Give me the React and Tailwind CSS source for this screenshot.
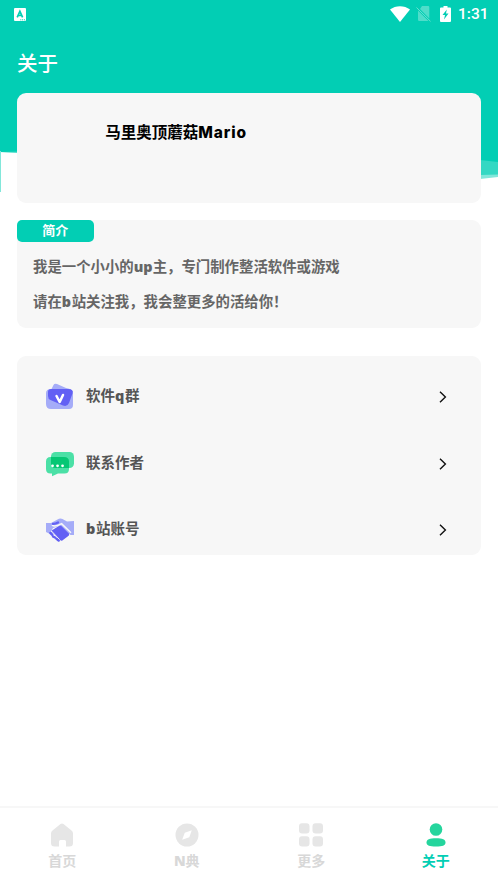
import React from 'react';

const Latin = ({ children, className = '' }) => (
  <span className={`inline-block font-['Open_Sans'] font-extrabold ${className}`}>{children}</span>
);

const StatusBar = () => (
  <div className="flex h-7 items-center justify-between pl-[14px] pr-[9px] text-white">
    <svg width="12" height="13" viewBox="0 0 12 13">
      <rect width="12" height="13" rx="1" fill="#fff" />
      <path d="M3.200 9.300 5.900 3.400 8.600 9.300M4 7.500H7.800" fill="none" stroke="#02ceb4" strokeWidth="1.700" />
      <path d="M6.300 11.800H11.200" stroke="#02ceb4" strokeWidth="1" strokeDasharray="1 .8" />
    </svg>
    <div className="flex items-center">
      <svg className="-mt-px" width="20" height="16" viewBox="0 0 20 16">
        <path d="M0 3.500C5.500-1 14.500-1 20 3.500L10 16Z" fill="#fff" />
      </svg>
      <svg className="ml-[6px] -mt-px" width="15" height="17" viewBox="0 0 15 17">
        <path d="M6 1H12.200Q13.300 1 13.300 2.200V13.500L4 4ZM2 5.500 12.500 16H3.200Q2 16 2 14.700Z" fill="#fff" opacity=".3" />
        <path d="M.5 2.500 14.500 16.300" stroke="#fff" opacity=".4" />
      </svg>
      <svg className="ml-[9px] -mt-px" width="11" height="16" viewBox="0 0 11 16">
        <path d="M3.500 0H7.500V1.500H10Q11 1.500 11 2.500V15Q11 16 10 16H1Q0 16 0 15V2.500Q0 1.500 1 1.500H3.500Z" fill="#fff" />
        <path d="M6.800 3.500 2.500 9H5L4 13.500 8.500 7.500H6Z" fill="#02ceb4" />
      </svg>
      <span className="ml-[7px] w-[31px] whitespace-nowrap font-[Roboto] text-[15.500px] font-medium leading-7">1:31</span>
    </div>
  </div>
);

const Waves = () => (
  <svg className="absolute left-0 top-0 -z-10" width="498" height="195" viewBox="0 0 498 195">
    <path d="M0 0H498V177L480 179 250 170 17 153 0 152Z" fill="#82e7da" />
    <path d="M0 0H498V174.500L480 175 250 168 17 152.500 0 152Z" fill="#34d8c3" />
    <path d="M0 0H498V162L480 160 250 150 17 151.500 0 152Z" fill="#02ceb4" />
    <path d="M0 151H1V192H0Z" fill="#82e7da" />
  </svg>
);

const MessageBadge = () => (
  <svg width="28" height="28" viewBox="0 0 28 28">
    <path d="M5.500 6 7.500 2Q8.500 0 11 1L20 5Q27 6 27 10V22Q27 26 23 26H5Q0 26 0 21V10Q0 6 5.500 6Z" fill="#a5acf8" />
    <path d="M5 6H22Q28 6 26.500 10.500L23 20Q21.300 24 17 22.500L4.500 17Q2 16 2 13V9Q2 6 5 6Z" fill="#6260f4" />
    <path d="M10.500 13 13.700 19 17 12" fill="none" stroke="#fff" strokeWidth="2.500" strokeLinecap="round" strokeLinejoin="round" />
  </svg>
);

const ChatIcon = () => (
  <svg width="28" height="28" viewBox="0 0 28 28">
    <rect x="5" y="2" width="23" height="16" rx="4.500" fill="#4be0a6" />
    <path d="M4.500 7H18Q23 7 23 11.500V19Q23 23.500 18.500 23.500H12L6 26.200V23.500H4.500Q0 23.500 0 19V11.500Q0 7 4.500 7Z" fill="#4be0a6" />
    <path d="M5 7H18Q23 7 23 11.500V18H9.500Q5 18 5 13.500Z" fill="#05c774" />
    <path d="M6.500 15.800H6.600M11.500 15.800H11.600M16.500 15.800H16.600" stroke="#fff" strokeWidth="2.700" strokeLinecap="round" />
  </svg>
);

const HandshakeIcon = () => (
  <svg width="28" height="28" viewBox="0 0 28 28">
    <path d="M0 7H5L11.500 3.500Q14 2 16.500 3L21 5.500 28 5V19H24.500L15 9.500 7 12 4 18 0 16Z" fill="#a5acf8" />
    <path d="M6 14.300 13.300 9.700Q14.500 9 15.500 10L23 17.500Q23.700 19 22.300 20L16 24.800Q15 25 14 24L6 16Z" fill="#6260f4" />
    <path d="M6 9.200Q9 11.500 15.500 7.600L25 16.800" fill="none" stroke="#f7f7f7" strokeWidth="1.500" strokeLinejoin="round" />
    <path d="M7 7.800Q9 8 12 6.500" fill="none" stroke="#6260f4" strokeWidth="2.300" strokeLinecap="round" />
    <path d="M4.500 17 6.300 18.800M7 20.500 9 21.500M10.500 22.800 12.700 24.500" stroke="#6260f4" strokeWidth="2.500" strokeLinecap="round" />
    <path d="M5.500 15 13.500 23.500" fill="none" stroke="#f7f7f7" strokeWidth=".9" />
  </svg>
);

const LinkRow = ({ icon, children }) => (
  <div className="flex h-[66.500px] items-center pl-[29px] pr-[34px]">
    {icon}
    <span className="ml-[12.500px] -mt-[3px] flex-1 whitespace-nowrap text-[14.500px] font-bold leading-5 text-[#555]">{children}</span>
    <svg width="8" height="12" viewBox="0 0 8 12">
      <path d="M1 .7 6.400 6 1 11.300" fill="none" stroke="#111" strokeWidth="1.400" />
    </svg>
  </div>
);

const HomeIcon = () => (
  <svg width="24" height="24" viewBox="0 0 24 24">
    <path d="M10.500 1Q12 0 13.500 1L21.500 7.500Q23 8.700 23 10.500V20Q23 23.500 19.500 23.500H16V18.500Q16 17 14.500 17H10.500Q9 17 9 18.500V23.500H4.500Q1 23.500 1 20V10.500Q1 8.700 2.500 7.500Z" fill="#e6e6e6" />
  </svg>
);
const CompassIcon = () => (
  <svg width="24" height="24" viewBox="0 0 24 24">
    <circle cx="12" cy="12" r="11.500" fill="#e6e6e6" />
    <path d="M16.800 7.200 14.300 14.200 7.200 16.800 9.800 9.700Z" fill="#fff" />
  </svg>
);
const GridIcon = () => (
  <svg width="24" height="24" viewBox="0 0 24 24" fill="#e6e6e6">
    <rect x="0" y=".3" width="10.500" height="10.300" rx="3" />
    <rect x="13.500" y=".3" width="10.500" height="10.300" rx="3" />
    <rect x="0" y="13.300" width="10.500" height="10.300" rx="3" />
    <rect x="13.500" y="13.300" width="10.500" height="10.300" rx="3" />
  </svg>
);
const PersonIcon = () => (
  <svg width="24" height="24" viewBox="0 0 24 24" fill="#25d59d">
    <circle cx="12" cy="6.500" r="6.300" />
    <path d="M2.500 19.500C2.500 16.500 5.500 15.200 12 15.200S21.500 16.500 21.500 19.500 18.500 23.500 12 23.500 2.500 22.500 2.500 19.500Z" />
  </svg>
);

const NavItem = ({ icon, active, children }) => (
  <div className="flex w-[124.500px] flex-col items-center pt-[15px]">
    {icon}
    <span className={`mt-[3px] whitespace-nowrap text-[14px] font-bold leading-5 ${active ? 'text-[#02ceb4]' : 'text-[#d8d8d8]'}`}>{children}</span>
  </div>
);

export default function App() {
  return (
    <div className="relative isolate flex h-[885px] w-[498px] flex-col overflow-hidden bg-white font-['Noto_Sans_CJK_SC',sans-serif]">
      <Waves />
      <StatusBar />
      <h1 className="flex h-[65px] items-center pl-[17px] pt-[3px] text-[20.500px] font-medium text-white">关于</h1>
      <main className="flex flex-1 flex-col px-[16.600px]">
        <section className="h-[110.400px] w-[464.700px] rounded-[9px] bg-[#f7f7f7] pl-[88.600px] pt-[26px]">
          <p className="whitespace-nowrap text-[15.500px] font-bold leading-6 text-black">马里奥顶蘑菇<Latin className="font-[Inter]! tracking-[0.900px]">Mario</Latin></p>
        </section>
        <section className="mt-[16.600px] h-[108.400px] w-[464.700px] rounded-[9px] bg-[#f7f7f7]">
          <div className="flex h-[22px] w-[77.400px] items-center justify-center rounded-[5px] bg-[#02ceb4] pb-[2px] text-[13px] font-bold leading-5 text-white">简介</div>
          <div className="whitespace-nowrap pl-[16.400px] pt-[6px] text-[14.400px] font-bold leading-[35px] text-[#666]">
            <p className="h-[35px]">我是一个小小的<Latin>up</Latin>主，专门制作整活软件或游戏</p>
            <p className="h-[35px]">请在<Latin className="tracking-[0.600px]">b</Latin>站关注我，我会整更多的活给你！</p>
          </div>
        </section>
        <section className="mt-[27.600px] h-[199px] w-[464.700px] overflow-hidden rounded-[9px] bg-[#f7f7f7] pt-[8px]">
          <LinkRow icon={<MessageBadge />}>软件<Latin className="tracking-[0.600px]">q</Latin>群</LinkRow>
          <LinkRow icon={<ChatIcon />}>联系作者</LinkRow>
          <LinkRow icon={<HandshakeIcon />}><Latin className="tracking-[0.600px]">b</Latin>站账号</LinkRow>
        </section>
      </main>
      <nav className="flex h-[79px] border-t-2 border-[#f7f7f7] bg-white">
        <NavItem icon={<HomeIcon />}>首页</NavItem>
        <NavItem icon={<CompassIcon />}><Latin>N</Latin>典</NavItem>
        <NavItem icon={<GridIcon />}>更多</NavItem>
        <NavItem icon={<PersonIcon />} active>关于</NavItem>
      </nav>
    </div>
  );
}
